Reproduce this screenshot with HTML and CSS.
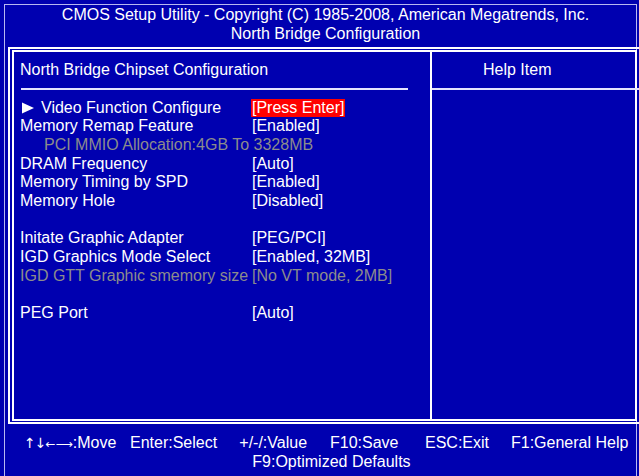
FILE: index.html
```html
<!DOCTYPE html>
<html>
<head>
<meta charset="utf-8">
<link rel="stylesheet" href="styles.css">
</head>
<body>
<div class="screen">
  <header class="title">
    <div>CMOS Setup Utility - Copyright (C) 1985-2008, American Megatrends, Inc.</div>
    <div>North Bridge Configuration</div>
  </header>
  <div class="frame">
    <div class="panel">
      <section class="main">
        <div class="main-title">North Bridge Chipset Configuration</div>
        <div class="rule"></div>
        <div class="items">
          <div class="row"><span class="label"><svg class="arrow" viewBox="0 0 12 12"><polygon points="0,0.5 12,6 0,11.5" fill="#fff"/></svg>Video Function Configure</span><span class="value"><span class="hl">[Press Enter]</span></span></div>
          <div class="row"><span class="label">Memory Remap Feature</span><span class="value">[Enabled]</span></div>
          <div class="row dim"><span class="label indent">PCI MMIO Allocation:4GB To 3328MB</span></div>
          <div class="row"><span class="label">DRAM Frequency</span><span class="value">[Auto]</span></div>
          <div class="row"><span class="label">Memory Timing by SPD</span><span class="value">[Enabled]</span></div>
          <div class="row"><span class="label">Memory Hole</span><span class="value">[Disabled]</span></div>
          <div class="row"></div>
          <div class="row"><span class="label">Initate Graphic Adapter</span><span class="value">[PEG/PCI]</span></div>
          <div class="row"><span class="label">IGD Graphics Mode Select</span><span class="value">[Enabled, 32MB]</span></div>
          <div class="row dim"><span class="label">IGD GTT Graphic smemory size</span><span class="value">[No VT mode, 2MB]</span></div>
          <div class="row"></div>
          <div class="row"><span class="label">PEG Port</span><span class="value">[Auto]</span></div>
        </div>
      </section>
      <aside class="help">
        <div class="help-title">Help Item</div>
        <div class="rule rule-full"></div>
      </aside>
    </div>
  </div>
  <footer class="keys">
    <div class="keyrow">
      <span><span class="arr">↑↓</span><span class="arr arr-h">←⟶</span>:Move</span>
      <span>Enter:Select</span>
      <span>+/-/:Value</span>
      <span>F10:Save</span>
      <span>ESC:Exit</span>
      <span>F1:General Help</span>
    </div>
    <div class="keyrow2">F9:Optimized Defaults</div>
  </footer>
</div>
</body>
</html>
```

FILE: styles.css
```css
html, body {
  margin: 0;
  padding: 0;
  background: #0000b0;
}
body {
  font-family: "Liberation Sans", Arial, sans-serif;
  font-size: 16px;
  color: #ffffff;
  width: 639px;
  height: 476px;
  overflow: hidden;
}
.screen {
  margin: 4px 0 0 4px;
  width: 631px;
  height: 471px;
  border: 1px solid #b8b8f0;
  border-bottom: none;
}
.title {
  line-height: 18.5px;
  text-align: center;
  padding-left: 10px;
  padding-top: 1px;
}
.frame {
  margin: 4px -3px 0 3px;
  border: 2px solid #ffffff;
  border-right: none;
  padding: 1px 0 1px 2px;
}
.panel {
  margin-right: 2px;
  border: 2px solid #ffffff;
  height: 367px;
  display: grid;
  grid-template-columns: 416px 1fr;
}
.main {
  padding-left: 6px;
}
.main-title {
  line-height: 35px;
}
.rule {
  height: 2px;
  background: #e4e4ff;
  margin: 1px 0 0 1px;
  width: 387px;
}
.items {
  margin-top: 8.5px;
}
.row {
  display: flex;
  height: 18.7px;
  line-height: 18.7px;
  white-space: nowrap;
}
.label {
  flex: none;
  width: 232px;
}
.indent {
  padding-left: 24px;
  width: auto;
}
.dim {
  color: #8c8c8c;
}
.arrow {
  display: inline-block;
  width: 12px;
  height: 12px;
  margin: 0 7px 0 2px;
  vertical-align: -1px;
}
.hl {
  display: inline-block;
  background: #ff0000;
  line-height: 18px;
  padding: 0 1px;
  margin-left: -1px;
}
.help {
  border-left: 2px solid #ffffff;
}
.help-title {
  line-height: 35px;
  padding-left: 51px;
}
.rule-full {
  width: auto;
  margin: 1px -5px 0 0;
}
.keys {
  margin-top: 9.5px;
  line-height: 18.5px;
  white-space: nowrap;
}
.keyrow {
  display: grid;
  grid-template-columns: 105px 109.3px 90.7px 95px 86px auto;
  padding-left: 19px;
}
.arr {
  font-family: "DejaVu Sans", sans-serif;
  font-size: 14px;
  letter-spacing: -1px;
}
.arr-h {
  font-size: 12px;
  letter-spacing: 0;
}
.keyrow > span:not(:first-child) {
  margin-left: 1px;
}
.keyrow2 {
  padding-left: 247.3px;
}
```
